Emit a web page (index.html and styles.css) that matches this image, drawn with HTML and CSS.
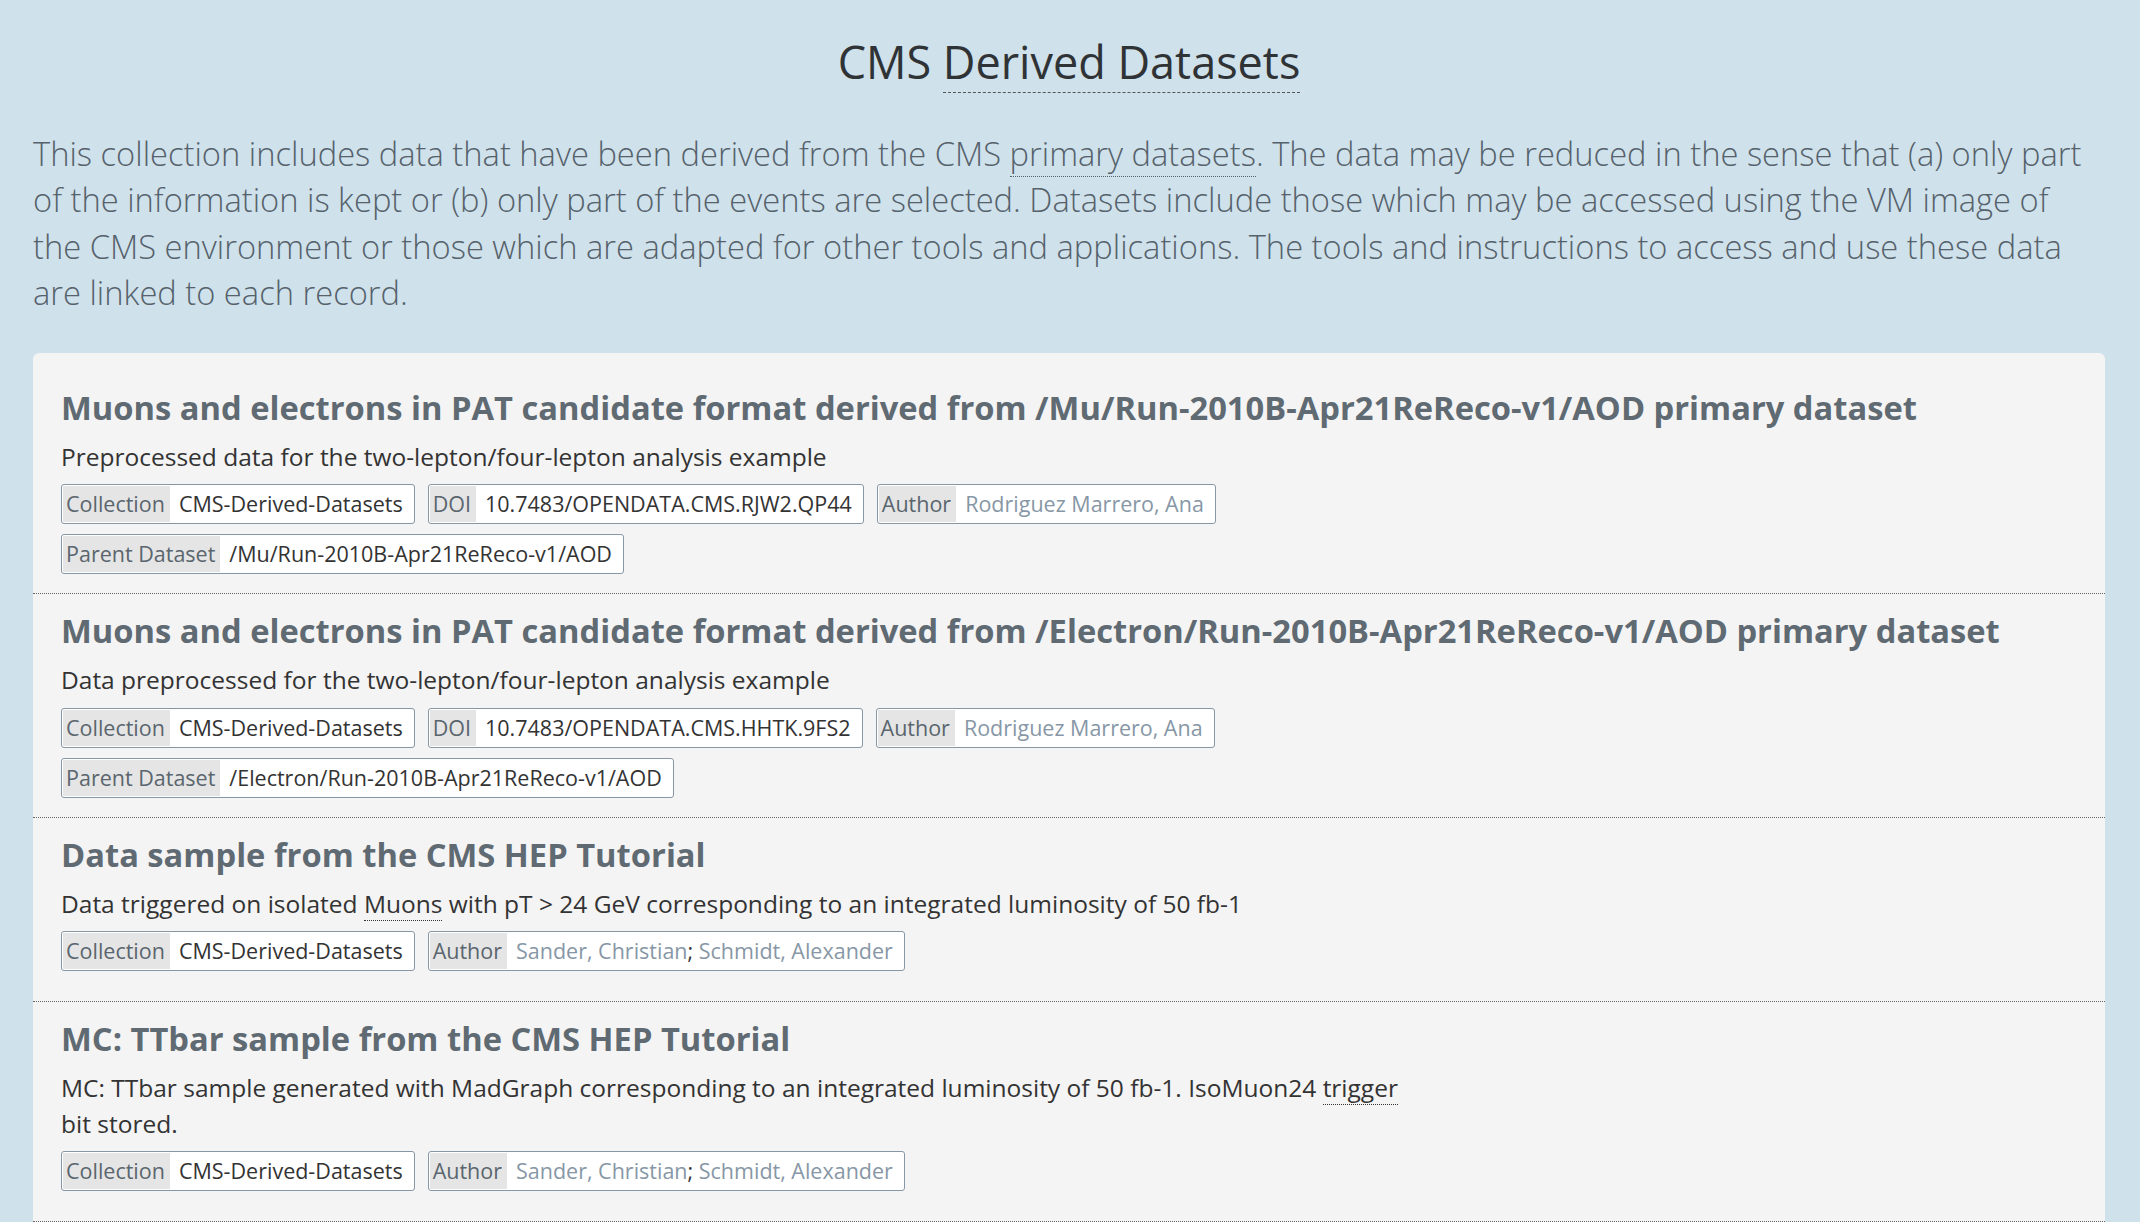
FILE: index.html
```html
<!DOCTYPE html>
<html lang="en">
<head>
<meta charset="utf-8">
<title>CMS Derived Datasets</title>
<link rel="stylesheet" href="styles.css">
</head>
<body>
<div class="page">
  <h1 class="page-title">CMS <span class="dashed">Derived Datasets</span></h1>
  <p class="intro">This collection includes data that have been derived from the CMS <span class="dotted">primary datasets</span>. The data may be reduced in the sense that (a) only part of the information is kept or (b) only part of the events are selected. Datasets include those which may be accessed using the VM image of the CMS environment or those which are adapted for other tools and applications. The tools and instructions to access and use these data are linked to each record.</p>

  <div class="card">
    <div class="item">
      <h2 class="item-title">Muons and electrons in PAT candidate format derived from /Mu/Run-2010B-Apr21ReReco-v1/AOD primary dataset</h2>
      <p class="item-desc">Preprocessed data for the two-lepton/four-lepton analysis example</p>
      <div class="tags">
        <span class="tag"><span class="tag-label">Collection</span><span class="tag-value">CMS-Derived-Datasets</span></span>
        <span class="tag"><span class="tag-label">DOI</span><span class="tag-value">10.7483/OPENDATA.CMS.RJW2.QP44</span></span>
        <span class="tag"><span class="tag-label">Author</span><span class="tag-value author">Rodriguez Marrero, Ana</span></span>
      </div>
      <div class="tags">
        <span class="tag"><span class="tag-label">Parent Dataset</span><span class="tag-value">/Mu/Run-2010B-Apr21ReReco-v1/AOD</span></span>
      </div>
    </div>

    <div class="item">
      <h2 class="item-title">Muons and electrons in PAT candidate format derived from /Electron/Run-2010B-Apr21ReReco-v1/AOD primary dataset</h2>
      <p class="item-desc">Data preprocessed for the two-lepton/four-lepton analysis example</p>
      <div class="tags">
        <span class="tag"><span class="tag-label">Collection</span><span class="tag-value">CMS-Derived-Datasets</span></span>
        <span class="tag"><span class="tag-label">DOI</span><span class="tag-value">10.7483/OPENDATA.CMS.HHTK.9FS2</span></span>
        <span class="tag"><span class="tag-label">Author</span><span class="tag-value author">Rodriguez Marrero, Ana</span></span>
      </div>
      <div class="tags">
        <span class="tag"><span class="tag-label">Parent Dataset</span><span class="tag-value">/Electron/Run-2010B-Apr21ReReco-v1/AOD</span></span>
      </div>
    </div>

    <div class="item item-short">
      <h2 class="item-title">Data sample from the CMS HEP Tutorial</h2>
      <p class="item-desc">Data triggered on isolated <span class="dotted">Muons</span> with pT &gt; 24 GeV corresponding to an integrated luminosity of 50 fb-1</p>
      <div class="tags">
        <span class="tag"><span class="tag-label">Collection</span><span class="tag-value">CMS-Derived-Datasets</span></span>
        <span class="tag"><span class="tag-label">Author</span><span class="tag-value author">Sander, Christian<span class="sep">;</span> Schmidt, Alexander</span></span>
      </div>
    </div>

    <div class="item item-short">
      <h2 class="item-title">MC: TTbar sample from the CMS HEP Tutorial</h2>
      <p class="item-desc">MC: TTbar sample generated with MadGraph corresponding to an integrated luminosity of 50 fb-1. IsoMuon24 <span class="dotted">trigger</span> bit stored.</p>
      <div class="tags">
        <span class="tag"><span class="tag-label">Collection</span><span class="tag-value">CMS-Derived-Datasets</span></span>
        <span class="tag"><span class="tag-label">Author</span><span class="tag-value author">Sander, Christian<span class="sep">;</span> Schmidt, Alexander</span></span>
      </div>
    </div>
  </div>
</div>
</body>
</html>
```

FILE: styles.css
```css
html, body {
  margin: 0;
  padding: 0;
}
body {
  background: #cfe1eb;
  font-family: "Open Sans", "DejaVu Sans", sans-serif;
  color: #333;
}
.page {
  padding: 37px 35px 0 33px;
}
.page-title {
  margin: 0;
  text-align: center;
  font-size: 45px;
  line-height: 50px;
  font-weight: 400;
  color: #2f3336;
}
.dashed {
  border-bottom: 1px dashed #555;
}
.dotted {
  border-bottom: 1px dotted #333;
}
.intro {
  margin: 44px 0 36px;
  font-size: 32.7px;
  line-height: 46.4px;
  font-weight: 300;
  color: #56626b;
}
.intro .dotted {
  border-bottom-color: #56626b;
}
.card {
  background: #f4f4f4;
  border-radius: 6px 6px 0 0;
  padding-top: 18px;
  padding-bottom: 20px;
}
.item {
  padding: 17px 28px 9px;
  border-bottom: 1px dotted #666;
}
.item-short {
  padding-bottom: 20px;
}
.item-title {
  margin: 0 0 11px;
  font-size: 32.7px;
  line-height: 40px;
  font-weight: 700;
  color: #5f6a72;
}
.item-desc {
  margin: 0 0 10px;
  max-width: 66.6667%;
  font-size: 24.5px;
  line-height: 35.5px;
  color: #333;
}
.tags {
  display: flex;
  flex-wrap: wrap;
}
.tag {
  display: inline-flex;
  align-items: stretch;
  height: 40px;
  box-sizing: border-box;
  margin: 0 13px 10px 0;
  padding: 1px;
  border: 1px solid #8797a5;
  border-radius: 3px;
  background: #fff;
  font-size: 21.5px;
  line-height: 36px;
}
.tag-label {
  background: #e5e5e5;
  color: #5a656e;
  padding: 0 5px 0 3px;
}
.tag-value {
  color: #333;
  padding: 0 10px 0 9px;
}
.tag-value.author {
  color: #8797a6;
}
.tag-value .sep {
  color: #333;
}
```
